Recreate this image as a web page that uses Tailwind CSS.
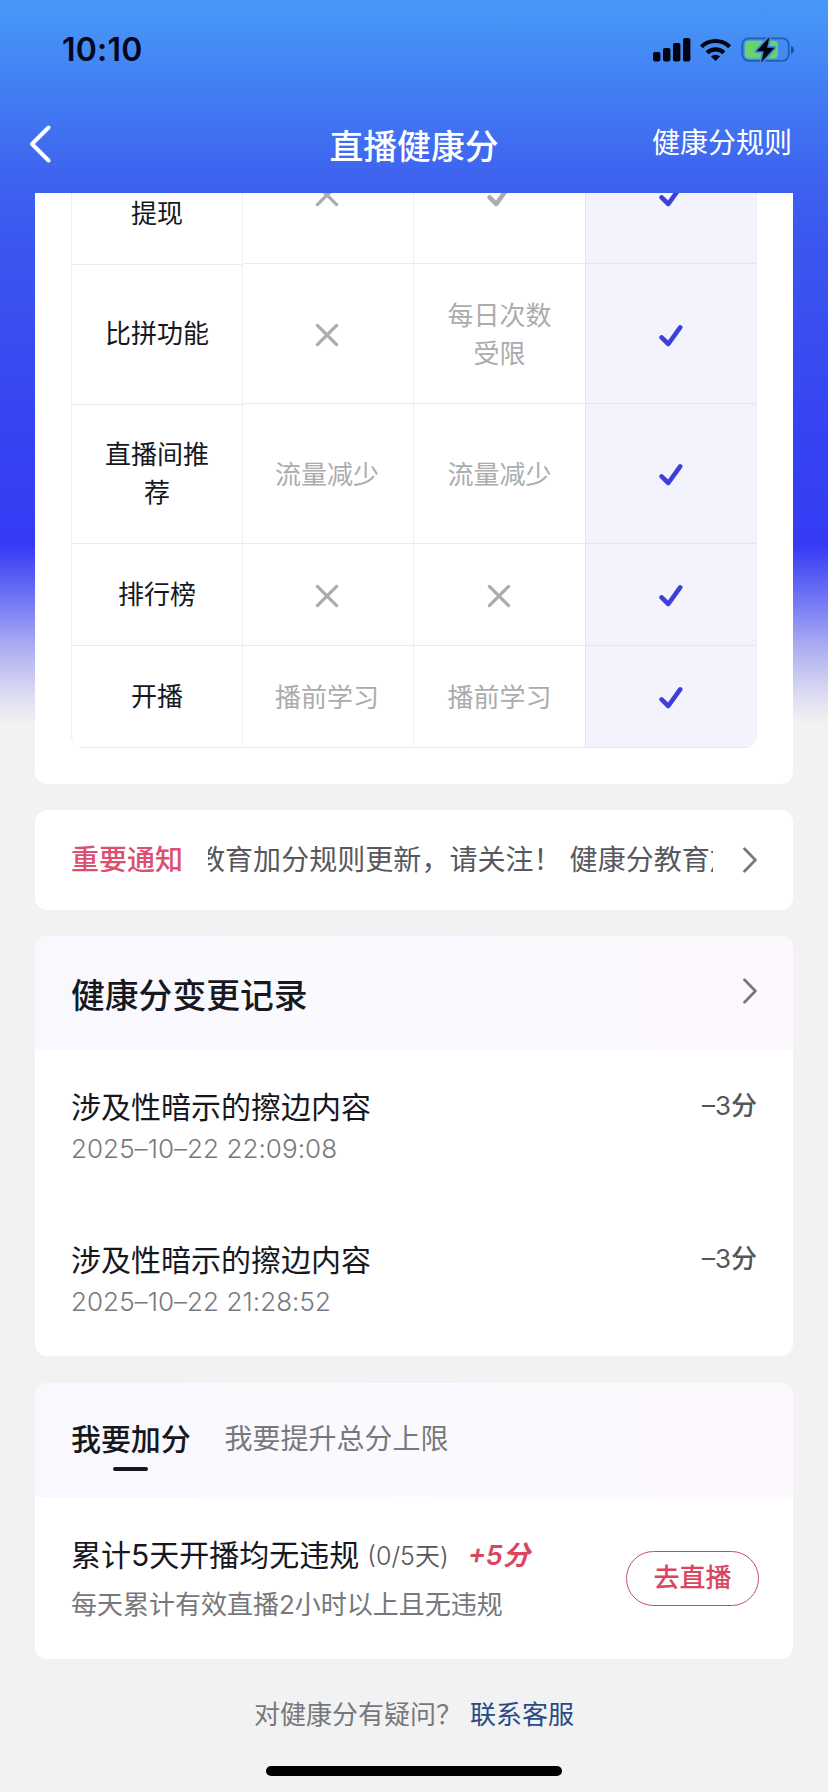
<!DOCTYPE html>
<html lang="zh-CN">
<head>
<meta charset="utf-8">
<title>直播健康分</title>
<script src="https://cdn.jsdelivr.net/npm/@tailwindcss/browser@4"></script>
</head>
<body class="bg-[#f2f2f2] font-['Inter','Noto_Sans_CJK_SC',sans-serif] text-[#17181f]">
<svg class="hidden">
  <symbol id="cross" viewBox="0 0 24 24"><path d="M2.4 2.4 21.6 21.6M21.6 2.4 2.4 21.6" fill="none" stroke="currentColor" stroke-width="3.3" stroke-linecap="round"/></symbol>
  <symbol id="check" viewBox="0 0 24 24"><path d="M2.6 13.4 9.3 20 21.2 3.4" fill="none" stroke="currentColor" stroke-width="4.6" stroke-linecap="round" stroke-linejoin="round"/></symbol>
  <symbol id="chev" viewBox="0 0 14 26"><path d="M1.5 1.8 12.4 13 1.5 24.2" fill="none" stroke="currentColor" stroke-width="2.7" stroke-linecap="round" stroke-linejoin="round"/></symbol>
</svg>
<div class="w-[828px] h-[1792px] overflow-hidden flex flex-col bg-[linear-gradient(to_bottom,#4899f7_0px,#4384f4_70px,#3e62ef_180px,#3b57ee_240px,#3644f2_420px,#353bf4_545px,#6c70f4_595px,#a9abf2_645px,#dddcf1_695px,#f2f2f2_724px)]">

  <div class="h-[100px] shrink-0 flex items-center justify-between pl-[62px] pr-[34px]">
    <span class="text-[32px] leading-[40px] font-semibold text-[#04081c] tracking-[0.2px]">10:10</span>
    <svg class="w-[142px] h-[28px]" viewBox="0 0 142 28">
      <g fill="#02050f">
        <rect x="1" y="16" width="7.4" height="9.4" rx="1.8"/><rect x="11" y="12" width="7.4" height="13.4" rx="1.8"/><rect x="21" y="7" width="7.4" height="18.4" rx="1.8"/><rect x="31" y="2" width="7.4" height="23.4" rx="1.8"/>
        <path d="M63.5 25 59 20.5a6.6 6.6 0 0 1 9 0Z"/>
      </g>
      <g fill="none" stroke="#02050f" stroke-width="4.2">
        <path d="M49.4 10.7a20.3 20.3 0 0 1 28.2 0"/><path d="M55.1 16.8a12.2 12.2 0 0 1 16.8 0"/>
      </g>
      <rect x="90.3" y="2.3" width="46.4" height="22.6" rx="6.5" fill="none" stroke="#1f5fae" stroke-width="1.8"/>
      <path d="M139 10v8c2-.5 3-2.200 3-4s-1-3.500-3-4Z" fill="#1f4f9e"/>
      <rect x="92.800" y="4.800" width="33" height="17.600" rx="4" fill="#67d36c"/>
      <path d="M117.500 1 104.500 15.200h7.200L109.200 26.500 122.500 11.800h-7.400Z" fill="#02050f" stroke="#4488e4" stroke-width="3.500" paint-order="stroke" stroke-linejoin="round"/>
    </svg>
  </div>

  <div class="h-[93px] shrink-0 grid grid-cols-[1fr_auto_1fr] items-center pl-[29px] pr-[36px]">
    <svg class="w-[22px] h-[38px] mb-[5px]" viewBox="0 0 22 38"><path d="M19.500 2.500 3 19 19.500 35.500" fill="none" stroke="#fff" stroke-width="4" stroke-linecap="round" stroke-linejoin="round"/></svg>
    <h1 class="ml-[7px] text-[33.8px] leading-[48px] font-medium text-white">直播健康分</h1>
    <span class="justify-self-end text-[28px] leading-[36px] text-white pb-2">健康分规则</span>
  </div>

  <section class="h-[591px] shrink-0 mx-[35px] px-[36px] pb-[36px] bg-white rounded-b-[12px] flex">
    <div class="w-full h-[555px] overflow-hidden flex rounded-b-[12px] border-x border-[#efeff1] text-[26px] leading-[38px] text-center">
      <div class="w-[171px] shrink-0 h-full flex flex-col justify-end border-r border-[#efeff1] *:shrink-0 *:flex *:items-center *:justify-center *:border-b *:border-[#ebebed] *:px-[30px]">
        <div class="h-[140px] pt-[38px]">提现</div>
        <div class="h-[140px] pb-[2px]">比拼功能</div>
        <div class="h-[139px]">直播间推荐</div>
        <div class="h-[102px]">排行榜</div>
        <div class="h-[102px]">开播</div>
      </div>
      <div class="w-[171px] shrink-0 h-full flex flex-col justify-end border-r border-[#efeff1] text-[#acacae] *:shrink-0 *:flex *:items-center *:justify-center *:border-b *:border-[#ebebed] *:px-[32px] *:pt-[2px]">
        <div class="h-[140px]"><svg class="size-[24px] mr-[2px]"><use href="#cross"/></svg></div>
        <div class="h-[140px]"><svg class="size-[24px] mt-[1px] mr-[2px]"><use href="#cross"/></svg></div>
        <div class="h-[140px]"><span class="-ml-[2px]">流量减少</span></div>
        <div class="h-[102px]"><svg class="size-[24px] mr-[2px]"><use href="#cross"/></svg></div>
        <div class="h-[102px]"><span class="-ml-[2px]">播前学习</span></div>
      </div>
      <div class="w-[171px] shrink-0 h-full flex flex-col justify-end text-[#acacae] *:shrink-0 *:flex *:items-center *:justify-center *:border-b *:border-[#ebebed] *:px-[32px] *:pt-[2px]">
        <div class="h-[140px]"><svg class="size-[24px] mt-[2px] mr-[2px]"><use href="#check"/></svg></div>
        <div class="h-[140px]">每日次数受限</div>
        <div class="h-[140px]">流量减少</div>
        <div class="h-[102px]"><svg class="size-[24px] mr-[2px]"><use href="#cross"/></svg></div>
        <div class="h-[102px]">播前学习</div>
      </div>
      <div class="flex-1 h-full flex flex-col justify-end bg-[#f3f3fe] border-l border-[#e3e2f1] text-[#3e3ed8] *:shrink-0 *:flex *:items-center *:justify-center *:border-b *:border-[#e5e4f3] *:pt-[2px]">
        <div class="h-[140px]"><svg class="size-[24px] mt-[2px]"><use href="#check"/></svg></div>
        <div class="h-[140px]"><svg class="size-[24px] mt-[2px]"><use href="#check"/></svg></div>
        <div class="h-[140px]"><svg class="size-[24px]"><use href="#check"/></svg></div>
        <div class="h-[102px]"><svg class="size-[24px]"><use href="#check"/></svg></div>
        <div class="h-[102px]"><svg class="size-[24px] mt-[1px]"><use href="#check"/></svg></div>
      </div>
    </div>
  </section>

  <section class="mt-[26px] h-[100px] shrink-0 mx-[35px] px-[36px] bg-white rounded-[12px] flex items-center text-[28px] leading-[40px]">
    <span class="shrink-0 font-medium text-[#dc4f6f]">重要通知</span>
    <div class="ml-[25px] w-[505px] overflow-hidden flex whitespace-nowrap text-[#57585d]"><span class="-ml-[11px] whitespace-pre tracking-[0.05px]">教育加分规则更新，请关注！ 健康分教育加分规则更新</span></div>
    <svg class="ml-auto w-[14px] h-[26px] text-[#77787c]"><use href="#chev"/></svg>
  </section>

  <section class="mt-[26px] h-[420px] shrink-0 mx-[35px] bg-white rounded-[12px] overflow-hidden">
    <div class="h-[114px] px-[36px] flex items-center justify-between bg-linear-to-r from-[#f8f8fe] via-[#fafaff] to-[#fdf8fe]">
      <h2 class="text-[33.8px] leading-[48px] font-medium pt-[5px]">健康分变更记录</h2>
      <svg class="w-[14px] h-[26px] text-[#77787c] mb-[4px]"><use href="#chev"/></svg>
    </div>
    <div class="h-[153px] px-[36px] pt-[36px] flex justify-between">
      <div>
        <p class="text-[30px] leading-[42px]">涉及性暗示的擦边内容</p>
        <p class="text-[26px] leading-[42px] font-[350] text-[#77787b] tracking-[0.05px]">2025–10–22 22:09:08</p>
      </div>
      <span class="pt-[1px] text-[26px] leading-[38px] text-[#55565a]">–3<span class="font-medium">分</span></span>
    </div>
    <div class="h-[153px] px-[36px] pt-[36px] flex justify-between">
      <div>
        <p class="text-[30px] leading-[42px]">涉及性暗示的擦边内容</p>
        <p class="text-[26px] leading-[42px] font-[350] text-[#77787b] tracking-[0.05px]">2025–10–22 21:28:52</p>
      </div>
      <span class="pt-[1px] text-[26px] leading-[38px] text-[#55565a]">–3<span class="font-medium">分</span></span>
    </div>
  </section>

  <section class="mt-[27px] h-[276px] shrink-0 mx-[35px] bg-white rounded-[12px] overflow-hidden">
    <div class="h-[114px] px-[36px] pt-[35px] flex gap-[34px] bg-linear-to-r from-[#f8f8fe] via-[#fafaff] to-[#fdf8fe]">
      <div class="flex flex-col items-center">
        <span class="text-[30px] leading-[42px] font-medium tracking-[-0.1px]">我要加分</span>
        <span class="mt-[7px] w-[35px] h-[4px] rounded-full bg-[#17181f]"></span>
      </div>
      <span class="pt-[1px] text-[28px] leading-[40px] text-[#77787c]">我要提升总分上限</span>
    </div>
    <div class="h-[162px] px-[36px] flex items-center justify-between">
      <div class="pt-[1px]">
        <div class="flex items-center leading-[42px]">
          <span class="text-[30px]">累计5天开播均无违规</span>
          <span class="ml-[8px] pt-[3px] text-[25px] leading-[39px] font-[350] text-[#55565a]">(0/5天)</span>
          <span class="ml-[19px] pt-[2px] text-[27px] leading-[40px] font-semibold italic text-[#dc4560]">+5分</span>
        </div>
        <p class="mt-[10px] text-[26px] leading-[38px] text-[#77787c]">每天累计有效直播2小时以上且无违规</p>
      </div>
      <div class="-mr-[2px] w-[133px] h-[55px] rounded-full border border-[#cf4a63] flex items-center justify-center pb-[2px] text-[26px] font-medium text-[#dc4560]">去直播</div>
    </div>
  </section>

  <div class="mt-[37px] flex justify-center text-[26px] leading-[38px] text-[#77787c]">
    <span>对健康分有疑问？</span><span class="ml-[8px] text-[#294b86]">联系客服</span>
  </div>
  <div class="mt-[32px] w-[296px] h-[10px] shrink-0 self-center rounded-full bg-black"></div>
</div>
</body>
</html>
